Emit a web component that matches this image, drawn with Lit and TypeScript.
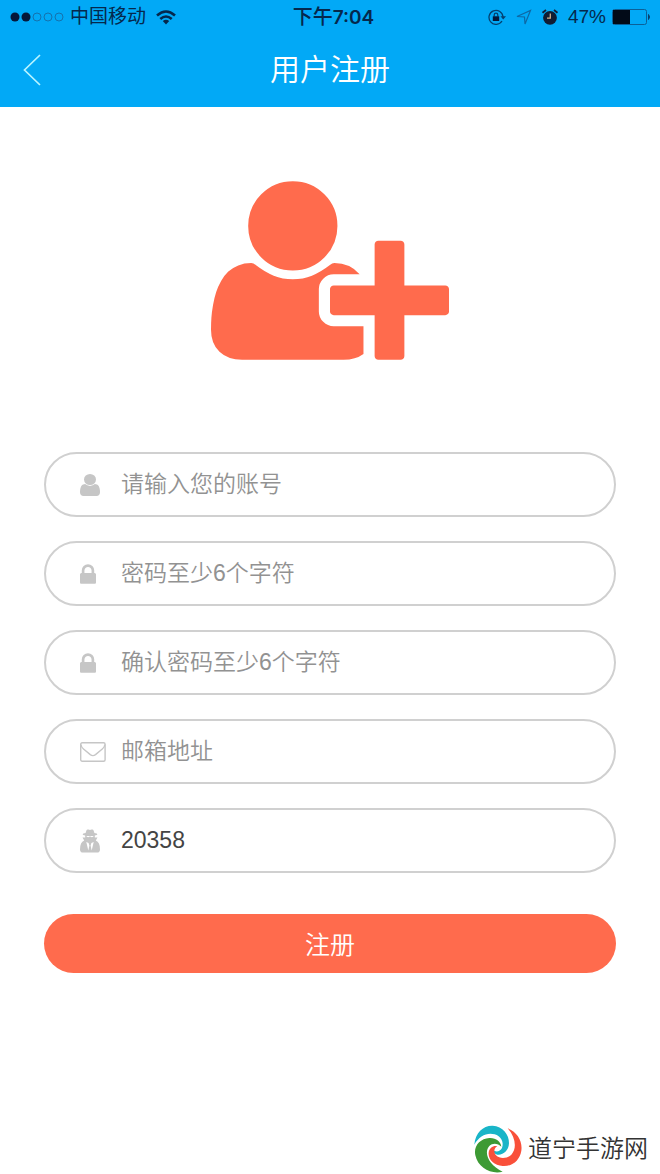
import { LitElement, html, css, svg } from "lit";
import { customElement } from "lit/decorators.js";

const USER = "M1536 1399q0 109-62.5 187t-150.5 78h-854q-88 0-150.5-78t-62.5-187q0-85 8.5-160.5t31.5-152 58.5-131 94-89 134.5-34.5q131 128 313 128t313-128q76 0 134.5 34.5t94 89 58.5 131 31.5 152 8.5 160.5zm-256-887q0 159-112.5 271.5t-271.5 112.5-271.5-112.5-112.5-271.5 112.5-271.5 271.5-112.5 271.5 112.5 112.5 271.5z";
const LOCK = "M640 768h512v-192q0-106-75-181t-181-75-181 75-75 181v192zm832 96v576q0 40-28 68t-68 28h-960q-40 0-68-28t-28-68v-576q0-40 28-68t68-28h32v-192q0-184 132-316t316-132 316 132 132 316v192h32q40 0 68 28t28 68z";
const USER_PLUS = "M704 896q-159 0-271.5-112.5t-112.5-271.5 112.5-271.5 271.5-112.5 271.5 112.5 112.5 271.5-112.5 271.5-271.5 112.5zm960 128h352q13 0 22.5 9.5t9.5 22.5v192q0 13-9.5 22.5t-22.5 9.5h-352v352q0 13-9.5 22.5t-22.5 9.5h-192q-13 0-22.5-9.5t-9.5-22.5v-352h-352q-13 0-22.5-9.5t-9.5-22.5v-192q0-13 9.5-22.5t22.5-9.5h352v-352q0-13 9.5-22.5t22.5-9.5h192q13 0 22.5 9.5t9.5 22.5v352zm-736 224q0 52 38 90t90 38h256v238q-68 50-171 50h-874q-121 0-194-69t-73-190q0-53 3.5-103.5t14-109 26.5-108.5 43-97.5 62-81 85.5-53.5 111.5-20q19 0 39 17 79 61 154.5 91.5t164.5 30.5 164.5-30.5 154.5-91.5q20-17 39-17 132 0 217 96h-223q-52 0-90 38t-38 90v192z";
const AGENT = "M5.6 4 6.400 1.400Q7 0 8.400.6L10 1 11.600.6Q13 0 13.600 1.400L14.400 4Q17.400 4.600 17.400 5.300 17.400 6.100 14.800 6.600V8.500L17.500 8.500 15.800 11.500Q20 13 20 20.500 20 23.600 17 23.600H3Q0 23.600 0 20.500 0 13 4.200 11.500L2.500 8.500 5.200 8.500V6.600Q2.600 6.100 2.600 5.300 2.600 4.600 5.600 4ZM6.300 13 8.300 21.500 9.400 16.500 8.600 14ZM13.700 13 11.700 21.500 10.600 16.500 11.400 14ZM6.600 7.500Q8.200 9 9.500 7.500H10.500Q11.800 9 13.400 7.500V7.100H6.600Z";

const icons = {
  user: html`<svg width="20" height="22" viewBox="256 128 1280 1536" preserveAspectRatio="none"><path d=${USER} /></svg>`,
  lock: html`<svg width="16" height="20" viewBox="320 128 1152 1408"><path d=${LOCK} /></svg>`,
  mail: html`<svg width="26" height="20" viewBox="0 0 26 20" fill="none" stroke="#c6c6c6" stroke-width="1.400">
    <rect x=".7" y=".7" width="24.400" height="18.600" rx="1.500" />
    <path d="M.9 2.500Q1.200 5.200 3.500 7L10.300 12.600Q12.900 14.600 15.500 12.600L22.300 7Q24.600 5.200 24.900 2.500" />
  </svg>`,
  agent: html`<svg width="20" height="24" viewBox="0 0 20 24"><path fill-rule="evenodd" d=${AGENT} /></svg>`,
};

interface Field {
  id: string;
  label: string;
  type: string;
  icon: keyof typeof icons;
  value?: string;
}

const fields: Field[] = [
  { id: "account", label: "请输入您的账号", type: "text", icon: "user" },
  { id: "password", label: "密码至少6个字符", type: "password", icon: "lock" },
  { id: "confirm", label: "确认密码至少6个字符", type: "password", icon: "lock" },
  { id: "email", label: "邮箱地址", type: "email", icon: "mail" },
  { id: "invite", label: "邀请码", type: "text", icon: "agent", value: "20358" },
];

@customElement("app-root")
export class AppRoot extends LitElement {
  static styles = css`
    :host {
      display: flex;
      flex-direction: column;
      min-height: 100vh;
      background: #fff;
      font-family: "Liberation Sans", "Noto Sans CJK SC", sans-serif;
    }
    * { box-sizing: border-box; }
    svg { display: block; flex: none; }
    .top { background: #02a9f6; color: #fff; }
    .status {
      display: grid;
      grid-template-columns: 1fr auto 1fr;
      align-items: center;
      height: 34px;
      padding: 0 9px 0 10px;
      color: #05284c;
      font-size: 19px;
      line-height: 24px;
    }
    .side { display: flex; align-items: center; gap: 6px; }
    .carrier { margin-right: 4px; }
    .right { justify-content: flex-end; gap: 9px; }
    .power { display: flex; align-items: center; gap: 6px; }
    .time { padding-left: 6px; font-size: 20px; font-weight: 500; }
    .clock { font-family: "Inter", sans-serif; font-size: 19px; font-weight: 600; }
    .nav {
      display: grid;
      grid-template-columns: 64px 1fr 64px;
      align-items: center;
      height: 73px;
      padding-bottom: 2px;
    }
    .back {
      display: flex;
      align-items: center;
      height: 70px;
      padding: 0 0 0 23px;
      border: 0;
      background: none;
      color: inherit;
    }
    .title {
      margin: 0;
      text-align: center;
      font-size: 30px;
      line-height: 40px;
      font-weight: 350;
    }
    .main { padding: 74px 44px 24px; }
    .hero { margin: 0 auto; fill: #ff6b4d; }
    .form { display: flex; flex-direction: column; gap: 24px; margin-top: 92px; }
    .field {
      display: flex;
      align-items: center;
      height: 65px;
      padding: 0 34px;
      border: 2px solid #d0d0d0;
      border-radius: 33px;
    }
    .icon { display: flex; width: 41px; fill: #c6c6c6; }
    .input {
      flex: 1;
      min-width: 0;
      height: 40px;
      padding: 0;
      border: 0;
      outline: 0;
      background: none;
      color: #444;
      font-family: inherit;
      font-size: 23px;
      font-weight: 350;
    }
    .input::placeholder { color: #929292; opacity: 1; }
    .submit {
      height: 59px;
      margin-top: 17px;
      padding: 0 0 2px;
      border: 0;
      border-radius: 30px;
      background: #ff6b4d;
      color: #fff;
      font-family: inherit;
      font-size: 25px;
      font-weight: 350;
    }
    .mark {
      display: flex;
      justify-content: flex-end;
      align-items: center;
      gap: 6px;
      margin-top: auto;
      padding: 0 12px 1px;
      color: #333;
      font-size: 24px;
      font-weight: 350;
      line-height: 48px;
    }
  `;

  private signal() {
    return html`<svg width="54" height="10" viewBox="0 0 54 10">
      ${[0, 1, 2, 3, 4].map((i) =>
        i < 2
          ? svg`<circle cx=${5 + i * 11} cy="5" r="4.500" fill="#05173a" />`
          : svg`<circle cx=${5 + i * 11} cy="5" r="4" fill="none" stroke="#1572ad" stroke-width="1" />`
      )}
    </svg>`;
  }

  render() {
    return html`
      <header class="top">
        <div class="status">
          <div class="side">
            ${this.signal()}
            <span class="carrier">中国移动</span>
            <svg width="20" height="15" viewBox="0 0 20 15" fill="none" stroke="#05284c" stroke-width="2.600">
              <path d="M1 5.500Q10-2.500 19 5.500M4.300 9Q10 4 15.700 9" />
              <path d="M6.800 11Q10 8.500 13.200 11L10 14.500Z" fill="#05284c" stroke="none" />
            </svg>
          </div>
          <div class="time">下午<span class="clock">7:04</span></div>
          <div class="side right">
            <svg width="19" height="16" viewBox="0 0 19 16" fill="none" stroke="#05406f" stroke-width="1.300">
              <path d="M14 12A7 7 0 1 1 15 8" />
              <path d="M12.500 7.300H18L15.200 10.500Z" fill="#05406f" stroke="none" />
              <path d="M6.200 7.500V6a1.800 1.800 0 0 1 3.600 0v1.500" />
              <path d="M4.800 7.300h6.400v4.700H4.800z" fill="#05173a" stroke="none" />
            </svg>
            <svg width="16" height="16" viewBox="0 0 16 16" fill="none" stroke="#0e68a4" stroke-width="1.200">
              <path d="M1 7.500 14.500 1.500 9 15 8.500 8Z" />
            </svg>
            <svg width="18" height="16" viewBox="0 0 18 16">
              <circle cx="9" cy="8.800" r="6.900" fill="#111c33" />
              <path d="M1.500 3.800 5 1M13 1 16.500 3.800" stroke="#111c33" stroke-width="1.800" />
              <path d="M9.300 4.500V9.200H6" fill="none" stroke="#d2b08c" stroke-width="1.300" />
            </svg>
            <span class="power">
              <span>47%</span>
              <svg width="39" height="16" viewBox="0 0 39 16">
                <rect x=".5" y=".5" width="34" height="15" rx="2" fill="none" stroke="#0b6098" />
                <path d="M1 1H18V15H1Z" fill="#020b18" />
                <path d="M36.500 5.500q2 2.500 0 5Z" fill="#05406f" stroke="#05406f" />
              </svg>
            </span>
          </div>
        </div>
        <div class="nav">
          <button class="back" type="button" aria-label="返回">
            <svg width="18" height="32" viewBox="0 0 18 32" fill="none" stroke="#b8f4ff" stroke-width="1.700">
              <path d="M17 1 1.500 16 17 31" />
            </svg>
          </button>
          <h1 class="title">用户注册</h1>
        </div>
      </header>
      <main class="main">
        <svg class="hero" width="238" height="179" viewBox="0 128 2048 1536"><path d=${USER_PLUS} /></svg>
        <form class="form" @submit=${(e: Event) => e.preventDefault()}>
          ${fields.map(
            (f) => html`<div class="field">
              <label class="icon" for=${f.id} aria-label=${f.label}>${icons[f.icon]}</label>
              <input class="input" id=${f.id} type=${f.type} placeholder=${f.label} .value=${f.value ?? ""} />
            </div>`
          )}
          <button class="submit" type="submit">注册</button>
        </form>
      </main>
      <footer class="mark">
        <svg width="48" height="48" viewBox="14 15 144 144">
          <path fill="#19b5c8" d="M15 74C18 38 42 16 70 17 100 19 120 44 119 70 118 92 102 106 84 104 76 103 71 97 72 90 78 97 92 96 98 84 105 66 94 48 76 43 52 37 30 48 15 74Z" />
          <path fill="#3d9a34" d="M100 155C66 164 26 144 18 106 12 78 32 56 60 54 80 53 94 64 96 80 86 70 70 68 60 78 42 98 58 136 100 155Z" />
          <path fill="#f9503a" d="M115 25C144 36 160 64 156 92 151 122 128 140 100 138 74 136 56 118 58 98 60 84 72 76 84 79 74 84 72 96 80 106 92 118 114 116 126 104 144 84 138 50 115 25Z" />
        </svg>
        <span>道宁手游网</span>
      </footer>
    `;
  }
}
